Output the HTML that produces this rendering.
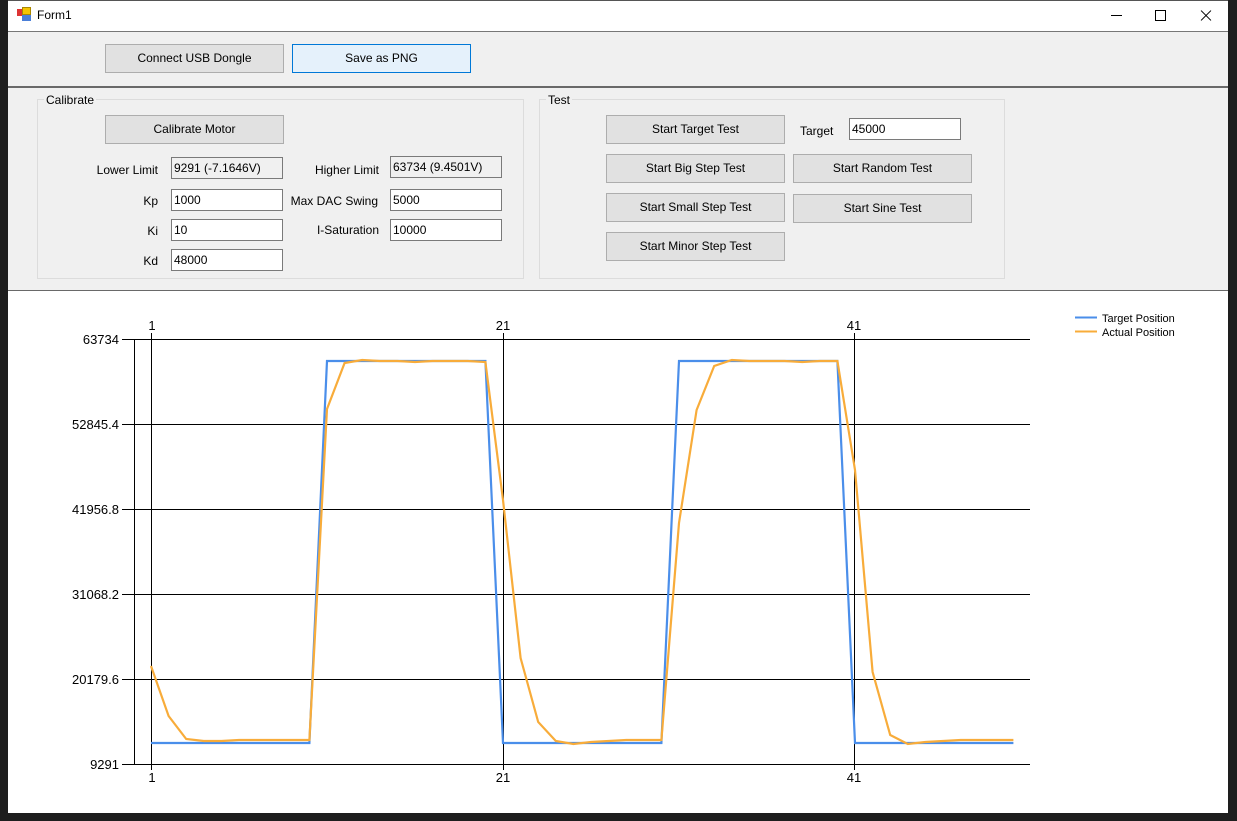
<!DOCTYPE html>
<html><head><meta charset="utf-8"><style>
*{margin:0;padding:0;box-sizing:border-box}
body{width:1237px;height:821px;background:#1e1e1e;position:relative;overflow:hidden;font-family:"Liberation Sans",sans-serif;font-size:12px;color:#000}
.a{position:absolute}
.btn{position:absolute;background:#e1e1e1;border:1px solid #adadad;text-align:center;line-height:27px;font-size:12px}
.tb{position:absolute;background:#fff;border:1px solid #7a7a7a;height:22px;line-height:20px;padding-left:2px;font-size:12px}
.ro{background:#f0f0f0}
.lbl{position:absolute;font-size:12px;text-align:right}
.grp{position:absolute;border:1px solid #dcdcdc}
.leg{position:absolute;background:#f0f0f0;padding:0 2px;font-size:12px}
</style></head><body>
<div class="a" style="left:8px;top:0;width:1220px;height:813px;background:#f0f0f0"></div>
<div class="a" style="left:8px;top:0;width:1220px;height:32px;background:#fff;border-top:1px solid #555"></div>
<div class="a" style="left:17px;top:9px;width:7px;height:7px;background:#d33"></div>
<div class="a" style="left:22px;top:7px;width:9px;height:8px;background:#f5c400;border:1px solid #a80"></div>
<div class="a" style="left:22px;top:15px;width:9px;height:6px;background:#4a7fd8"></div>
<div class="a" style="left:37px;top:8px;font-size:12px">Form1</div>
<div class="a" style="left:1111px;top:15px;width:11px;height:1px;background:#000"></div>
<div class="a" style="left:1155px;top:10px;width:11px;height:11px;border:1px solid #000"></div>
<div class="a" style="left:1199px;top:15px;width:14px;height:1px;background:#000;transform:rotate(45deg)"></div>
<div class="a" style="left:1199px;top:15px;width:14px;height:1px;background:#000;transform:rotate(-45deg)"></div>
<div class="a" style="left:8px;top:31px;width:1220px;height:1px;background:#777"></div>
<div class="a" style="left:8px;top:86px;width:1220px;height:2px;background:#696969"></div>
<div class="a" style="left:8px;top:290px;width:1220px;height:1px;background:#696969"></div>
<div class="a" style="left:8px;top:291px;width:1220px;height:522px;background:#fff"></div>

<div class="btn" style="left:105px;top:44px;width:179px;height:29px">Connect USB Dongle</div>
<div class="btn" style="left:292px;top:44px;width:179px;height:29px;background:#e5f1fb;border-color:#0078d7">Save as PNG</div>

<div class="grp" style="left:37px;top:99px;width:487px;height:180px"></div>
<div class="leg" style="left:44px;top:93px">Calibrate</div>
<div class="btn" style="left:105px;top:115px;width:179px;height:29px">Calibrate Motor</div>
<div class="lbl" style="left:60px;top:163px;width:98px">Lower Limit</div>
<div class="tb ro" style="left:171px;top:157px;width:112px">9291 (-7.1646V)</div>
<div class="lbl" style="left:60px;top:194px;width:98px">Kp</div>
<div class="tb" style="left:171px;top:189px;width:112px">1000</div>
<div class="lbl" style="left:60px;top:224px;width:98px">Ki</div>
<div class="tb" style="left:171px;top:219px;width:112px">10</div>
<div class="lbl" style="left:60px;top:254px;width:98px">Kd</div>
<div class="tb" style="left:171px;top:249px;width:112px">48000</div>
<div class="lbl" style="left:270px;top:163px;width:109px">Higher Limit</div>
<div class="tb ro" style="left:390px;top:156px;width:112px">63734 (9.4501V)</div>
<div class="lbl" style="left:270px;top:194px;width:108px">Max DAC Swing</div>
<div class="tb" style="left:390px;top:189px;width:112px">5000</div>
<div class="lbl" style="left:270px;top:223px;width:109px">I-Saturation</div>
<div class="tb" style="left:390px;top:219px;width:112px">10000</div>

<div class="grp" style="left:539px;top:99px;width:466px;height:180px"></div>
<div class="leg" style="left:546px;top:93px">Test</div>
<div class="btn" style="left:606px;top:115px;width:179px;height:29px">Start Target Test</div>
<div class="btn" style="left:606px;top:154px;width:179px;height:29px">Start Big Step Test</div>
<div class="btn" style="left:606px;top:193px;width:179px;height:29px">Start Small Step Test</div>
<div class="btn" style="left:606px;top:232px;width:179px;height:29px">Start Minor Step Test</div>
<div class="btn" style="left:793px;top:154px;width:179px;height:29px">Start Random Test</div>
<div class="btn" style="left:793px;top:194px;width:179px;height:29px">Start Sine Test</div>
<div class="a" style="left:800px;top:124px">Target</div>
<div class="tb" style="left:849px;top:118px;width:112px">45000</div>

<svg class="a" style="left:0;top:0" width="1237" height="821" font-family="Liberation Sans, sans-serif" font-size="13">
<g stroke="#000" stroke-width="1" shape-rendering="crispEdges">
<line x1="122" y1="339.5" x2="1030" y2="339.5"/>
<line x1="122" y1="424.5" x2="1030" y2="424.5"/>
<line x1="122" y1="509.5" x2="1030" y2="509.5"/>
<line x1="122" y1="594.5" x2="1030" y2="594.5"/>
<line x1="122" y1="679.5" x2="1030" y2="679.5"/>
<line x1="122" y1="764.5" x2="1030" y2="764.5"/>
<line x1="134.5" y1="339" x2="134.5" y2="765"/>
<line x1="151.5" y1="333" x2="151.5" y2="770"/>
<line x1="503.5" y1="333" x2="503.5" y2="770"/>
<line x1="854.5" y1="333" x2="854.5" y2="770"/>
</g>
<g text-anchor="end">
<text x="119" y="344">63734</text><text x="119" y="429">52845.4</text><text x="119" y="514">41956.8</text>
<text x="119" y="599">31068.2</text><text x="119" y="684">20179.6</text><text x="119" y="769">9291</text>
</g>
<g text-anchor="middle">
<text x="152" y="330">1</text><text x="503" y="330">21</text><text x="854" y="330">41</text>
<text x="152" y="782">1</text><text x="503" y="782">21</text><text x="854" y="782">41</text>
</g>
<polyline fill="none" stroke="#4a8eea" stroke-width="2.2" points="151,743 309.4,743 327,361 485.4,361 503,743 661.4,743 679,361 837.4,361 855,743 1013.4,743"/>
<polyline fill="none" stroke="#f8ac3a" stroke-width="2.2" points="151,666 168.6,716 186.2,739 203.8,741 221.4,741 239,740 256.6,740 274.2,740 291.8,740 309.4,740 327,409 344.6,363 362.2,360 379.8,361 397.4,361 415,362 432.6,361 450.2,361 467.8,361 485.4,362 503,500 520.6,658 538.2,722 555.8,741 573.4,744 591,742 608.6,741 626.2,740 643.8,740 661.4,740 679,523 696.6,410 714.2,366 731.8,360 749.4,361 767,361 784.6,361 802.2,362 819.8,361 837.4,361 855,470 872.6,672 890.2,735 907.8,744 925.4,742 943,741 960.6,740 978.2,740 995.8,740 1013.4,740"/>
<line x1="1075" y1="317.5" x2="1097" y2="317.5" stroke="#4a8eea" stroke-width="2"/>
<line x1="1075" y1="331.5" x2="1097" y2="331.5" stroke="#f8ac3a" stroke-width="2"/>
<text x="1102" y="322" font-size="11">Target Position</text>
<text x="1102" y="336" font-size="11">Actual Position</text>
</svg>
</body></html>
